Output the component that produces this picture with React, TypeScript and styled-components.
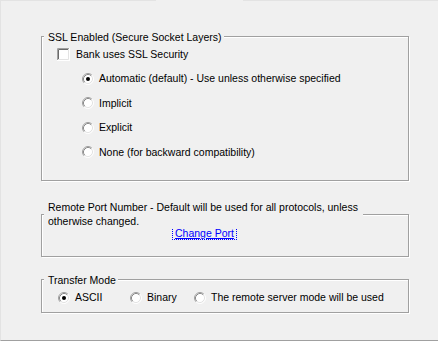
import React from "react";
import styled, { createGlobalStyle } from "styled-components";

const GlobalStyle = createGlobalStyle`
    html, body {
        margin: 0;
        padding: 0;
        background: #f0f0f0;
    }
    body {
        font-family: "Liberation Sans", Arial, sans-serif;
        font-size: 10.5px;
        color: #000;
    }
`

const Page = styled.div`
    position: relative;
    width: 438px;
    height: 341px;
    box-sizing: border-box;
    background: #f0f0f0;
    border-left: 1px solid #e3e3e3;
    border-bottom: 1px solid #a0a0a0;
    display: flex;
    flex-direction: column;
`

const TabEdge = styled.div`
    display: flex;
    height: 1px;
`

const EdgeSegment = styled.div<{ $w: number, $active?: boolean }>`
    width: ${props => props.$w}px;
    flex: ${props => props.$w === 0 ? 1 : "none"};
    background: ${props => props.$active ? "#f0f0f0" : "#e3e3e3"};
`

const Content = styled.div`
    display: flex;
    flex-direction: column;
    padding-left: 40px;
`

const GroupBox = styled.div<{ $h: number, $top: number }>`
    position: relative;
    width: 368px;
    height: ${props => props.$h}px;
    margin-top: ${props => props.$top}px;
    box-sizing: border-box;
    border: 1px solid #a0a0a0;
    box-shadow: inset 1px 1px 0 #fff, 1px 1px 0 #fff;
`

const Legend = styled.span<{ $width?: number }>`
    position: absolute;
    top: ${props => props.$width ? -15 : -6}px;
    left: 2px;
    padding: 0 2px 0 4px;
    width: ${props => props.$width ? `${props.$width}px` : "auto"};
    box-sizing: border-box;
    background: #f0f0f0;
    line-height: ${props => props.$width ? 14 : 13}px;
    white-space: nowrap;
`

const SslBody = styled.div`
    display: flex;
    flex-direction: column;
    gap: 11.4px;
    padding: 11px 0 0 15px;
`

const OptionRow = styled.label<{ $indent?: number, $gap?: number }>`
    display: flex;
    align-items: center;
    height: 13px;
    gap: ${props => props.$gap ?? 5}px;
    margin-left: ${props => props.$indent ?? 0}px;
    line-height: 13px;
    white-space: nowrap;
`

const PortBody = styled.div`
    padding: 12px 0 0 130px;
`

const ChangeLink = styled.a`
    display: inline-block;
    height: 13px;
    box-sizing: border-box;
    padding: 0 2px;
    border: 1px dotted #0000ff;
    color: #0000ff;
    line-height: 11px;
    text-decoration: underline;
    cursor: pointer;
`

const ModeBody = styled.div`
    display: grid;
    grid-template-columns: 72px 64px auto;
    padding: 11px 0 0 16px;
`

const Radio: React.FC<{ checked?: boolean }> = ({ checked }) => (
    <svg width="12" height="12" viewBox="0 0 12 12" style={{ flex: "none" }}>
        <circle cx="6" cy="6" r="5" fill="#fff" />
        <path d="M 2.11 9.89 A 5.5 5.5 0 0 1 9.89 2.11" fill="none" stroke="#a0a0a0" />
        <path d="M 9.89 2.11 A 5.5 5.5 0 0 1 2.11 9.89" fill="none" stroke="#fff" />
        <path d="M 2.82 9.18 A 4.5 4.5 0 0 1 9.18 2.82" fill="none" stroke="#8a8a8a" />
        <path d="M 9.18 2.82 A 4.5 4.5 0 0 1 2.82 9.18" fill="none" stroke="#e3e3e3" />
        {checked ? <circle cx="6" cy="6" r="2" fill="#000" /> : null}
    </svg>
)

const CheckBox: React.FC = () => (
    <svg width="13" height="13" viewBox="0 0 13 13" style={{ flex: "none" }}>
        <rect x="0" y="0" width="13" height="13" fill="#fff" />
        <path d="M 0.5 12.5 V 0.5 H 12.5" fill="none" stroke="#a0a0a0" />
        <path d="M 1.5 11.5 V 1.5 H 11.5" fill="none" stroke="#696969" />
        <path d="M 0 12.5 H 12.5 V 0" fill="none" stroke="#fff" />
        <path d="M 1 11.5 H 11.5 V 1" fill="none" stroke="#e3e3e3" />
    </svg>
)

const sslOptions = [
    { label: "Automatic (default) - Use unless otherwise specified", checked: true },
    { label: "Implicit" },
    { label: "Explicit" },
    { label: "None (for backward compatibility)" },
]

const modes = [
    { label: "ASCII", checked: true },
    { label: "Binary" },
    { label: "The remote server mode will be used" },
]

const App: React.FC = () => {
    return (
        <>
            <GlobalStyle />
            <Page>
                <TabEdge>
                    <EdgeSegment $w={155} />
                    <EdgeSegment $w={87} $active />
                    <EdgeSegment $w={0} />
                </TabEdge>
                <Content>
                    <GroupBox $h={145} $top={35}>
                        <Legend>SSL Enabled (Secure Socket Layers)</Legend>
                        <SslBody>
                            <OptionRow $gap={6}>
                                <CheckBox />
                                Bank uses SSL Security
                            </OptionRow>
                            {sslOptions.map(opt => (
                                <OptionRow key={opt.label} $indent={25}>
                                    <Radio checked={opt.checked} />
                                    {opt.label}
                                </OptionRow>
                            ))}
                        </SslBody>
                    </GroupBox>
                    <GroupBox $h={43} $top={33}>
                        <Legend $width={319}>
                            Remote Port Number - Default will be used for all protocols, unless<br />
                            otherwise changed.
                        </Legend>
                        <PortBody>
                            <ChangeLink>Change Port</ChangeLink>
                        </PortBody>
                    </GroupBox>
                    <GroupBox $h={34} $top={22}>
                        <Legend>Transfer Mode</Legend>
                        <ModeBody>
                            {modes.map(m => (
                                <OptionRow key={m.label}>
                                    <Radio checked={m.checked} />
                                    {m.label}
                                </OptionRow>
                            ))}
                        </ModeBody>
                    </GroupBox>
                </Content>
            </Page>
        </>
    )
}

export default App;
